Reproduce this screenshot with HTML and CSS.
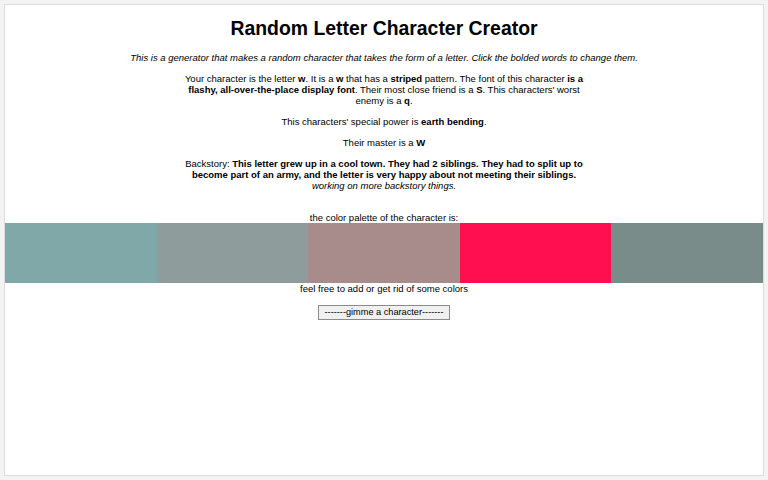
FILE: index.html
```html
<!DOCTYPE html>
<html>
<head>
<meta charset="utf-8">
<link rel="stylesheet" href="styles.css">
</head>
<body>
<div class="frame">
  <h1 class="title">Random Letter Character Creator</h1>
  <p class="intro">This is a generator that makes a random character that takes the form of a letter. Click the bolded words to change them.</p>
  <div class="story">
    <p>Your character is the letter <b>w</b>. It is a <b>w</b> that has a <b>striped</b> pattern. The font of this character <b>is a flashy, all-over-the-place display font</b>. Their most close friend is a <b>S</b>. This characters' worst enemy is a <b>q</b>.</p>
    <p>This characters' special power is <b>earth bending</b>.</p>
    <p>Their master is a <b>W</b></p>
    <p>Backstory: <b>This letter grew up in a cool town. They had 2 siblings. They had to split up to become part of an army, and the letter is very happy about not meeting their siblings.</b><br><i>working on more backstory things.</i></p>
  </div>
  <p class="label">the color palette of the character is:</p>
  <div class="palette">
    <div class="swatch c1"></div>
    <div class="swatch c2"></div>
    <div class="swatch c3"></div>
    <div class="swatch c4"></div>
    <div class="swatch c5"></div>
  </div>
  <p class="note">feel free to add or get rid of some colors</p>
  <div class="actions"><button class="btn">-------gimme a character-------</button></div>
</div>
</body>
</html>
```
FILE: styles.css
```css
html, body {
  margin: 0;
  padding: 0;
  background: #f3f3f3;
}
body {
  padding: 4px;
  font-family: "Liberation Sans", Arial, sans-serif;
  font-size: 9.5px;
  line-height: 11px;
  color: #000;
}
.frame {
  background: #fff;
  border: 1px solid #dcdcdc;
  height: 472px;
  box-sizing: border-box;
  text-align: center;
  overflow: hidden;
}
.title {
  font-size: 19.4px;
  line-height: 23px;
  margin: 12px 0 12px;
  font-weight: bold;
}
.intro {
  font-style: italic;
  margin: 0 0 10px;
}
.story {
  width: 400px;
  margin: 0 auto;
}
.story p {
  margin: 0 0 10px;
}
.story p:last-child {
  margin-bottom: 21px;
}
.label {
  margin: 0;
}
.palette {
  display: flex;
  height: 60px;
}
.swatch {
  flex: 1;
}
.c1 { background: #80a8a8; }
.c2 { background: #8f9c9c; }
.c3 { background: #a88b8b; }
.c4 { background: #ff0e50; }
.c5 { background: #7a8c8a; }
.note {
  margin: 0 0 11px;
}
.btn {
  font-family: "Liberation Sans", Arial, sans-serif;
  font-size: 9.2px;
  line-height: 11px;
  padding: 1px 6px;
  background: #f0f0f0;
  border: 1px solid #8a8a8a;
  border-radius: 0;
  color: #000;
}
```
